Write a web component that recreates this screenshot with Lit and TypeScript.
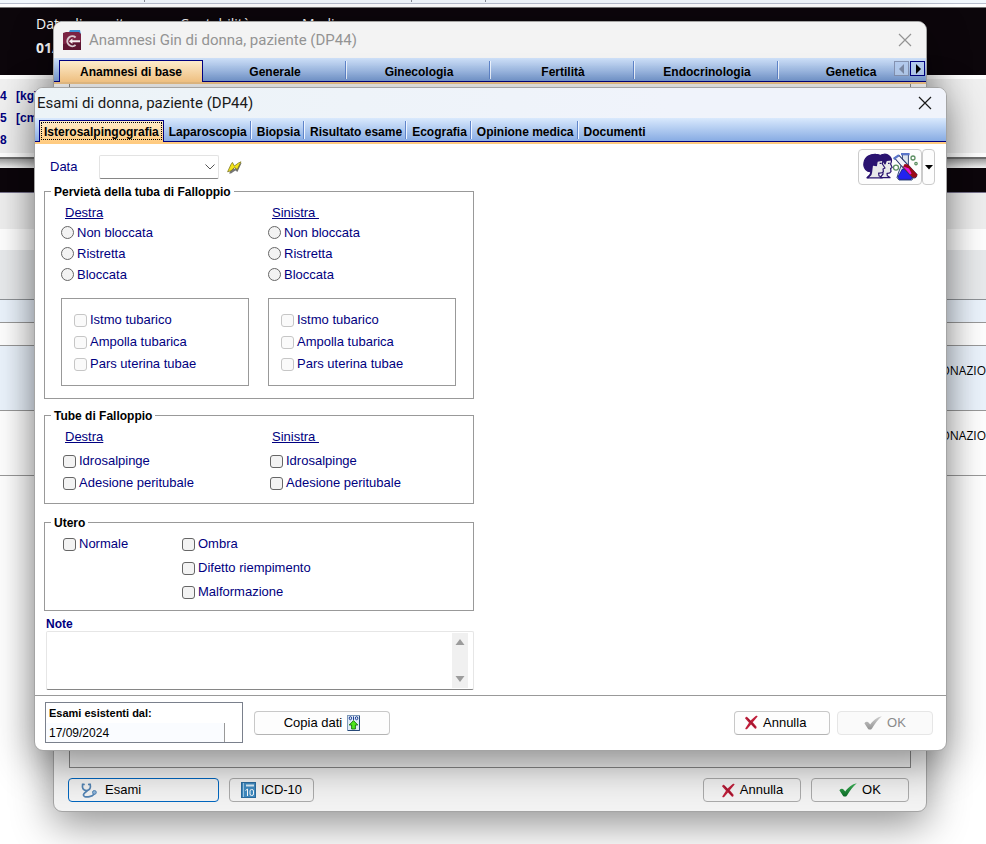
import { LitElement, html, css, svg, nothing } from "lit";
import { customElement, property, state } from "lit/decorators.js";
import { classMap } from "lit/directives/class-map.js";

const crossIcon = html`<svg width="14" height="15" viewBox="0 0 14 15" aria-hidden="true">
  <path d="M1 3.2 C2 1.6 3 1.4 3.6 2.4 L6.6 5.6 L11.4 1.2 C12.4 .4 13.6 .6 13.6 1.4 L8.8 7.2 L12.4 11.6 C13 12.8 12 14.4 10.8 13.4 L7 9.6 L3.4 13.8 C2.6 14.8 .9 14.4 1.4 13.2 L5 7.8 Z" fill="#bf1e3a" />
  <path d="M3.4 3.2 L7 7.4 L11.2 12.2" stroke="#8c1229" stroke-width="1" fill="none" />
</svg>`;

const tickIcon = (id: string, light: string, dark: string) => html`<svg width="18" height="14" viewBox="0 0 18 14" aria-hidden="true">
  <defs><linearGradient id=${id} x1="0" y1="0" x2="0" y2="1"><stop offset="0" stop-color=${light} /><stop offset="1" stop-color=${dark} /></linearGradient></defs>
  <path d="M.4 7.2 C1.8 5.4 3.8 5.4 5 7 L6.2 8.4 C9 4.8 13 1 17.8 .2 C13.8 3.6 10.6 8 8 12.4 C7 14 4.8 14 3.8 12.4 Z" fill="url(#${id})" />
</svg>`;

const boltIcon = html`<svg width="15" height="13" viewBox="0 0 15 13" aria-hidden="true">
  <path d="M2 12.5 L6 5 L7.4 8 L13 2.4 L14.6 2 L10.4 11 L8.4 9.4 L4 12.4 Z" fill="#777" />
  <path d="M.6 10.8 L4 3.4 L5.4 1.4 L7.4 5 L11.4 2 L14 .8 L10.2 8.6 L7.6 6.4 L4 9.8 Z" fill="#f2e21a" stroke="#6f6a18" stroke-width=".7" />
</svg>`;

const labIcon = html`<svg width="56" height="28" viewBox="-1 0 56 28" aria-hidden="true">
  <g stroke="#2a1370" stroke-width="1.2" stroke-linejoin="round">
    <path d="M19 10 C16 3 23 0 27 4 C29 6 28.6 9 27.6 11 L29.2 14.4 L27.6 15.4 L28 18.4 C27 20.6 25.6 20.4 24 20.4 L24.4 22.8 L27 24.6 L17 24.6 L20 21 Z" fill="#e8e8ea" />
    <path d="M16 4 C18 .6 24 0 27 4 L28 7 L23.4 7.4 L22 11 L20 8 Z" fill="#2a1370" />
    <path d="M8 8 L20 6.6 L19.4 11 L22 15 L20 16 L20.4 18.6 C19.4 20.6 17 20 15.6 20.2 L16 22.8 L19.4 24.8 L4 24.8 L7 22 L8 19 Z" fill="#e8e8ea" />
    <path d="M8.6 18.6 C4 19.6 0 15 1 9.6 C2 3.4 7.6 1 13 1.4 C17 1.6 20.6 4 20.4 7.2 L14.2 8.2 L13.4 12.6 L9.4 12 Z" fill="#2a1370" />
    <path d="M16.6 10.4 h2 M25 10.4 h1.6" fill="none" />
  </g>
  <path d="M4.4 25.2 C5.4 23 8.4 22.6 8.4 19" stroke="#2a1370" stroke-width="1.6" fill="none" />
  <path d="M39.4 1.6 L39.4 9 L35.4 20 L34 24.6 L36 27 L49 27 L50.4 24 L45.4 13 L45.4 1.6 Z" fill="#dce4ee" stroke="#354a7c" stroke-width="1" />
  <path d="M39.4 16 L45 16 L49.6 24 L48 26.4 L36.4 26.4 L34.8 24 Z" fill="#2222f0" stroke="#161682" stroke-width=".8" />
  <path d="M31.6 5 L36 2.4 L41.6 8.4 L53.8 21.4 C54.4 24.4 51.4 25.8 49.2 24 L38.4 13 Z" fill="#f3f3fa" stroke="#273469" stroke-width="1.1" />
  <path d="M41.6 11 L45 11.6 L54 21.2 C54.6 24.2 51.4 25.6 49.4 24 L40 14 Z" fill="#9a0a17" />
  <path d="M40.4 13.6 L46 15.4 L48.6 20.4 L47 21.4 Z" fill="#e815d8" />
  <path d="M30.6 6 L36 2.2 M38 1.2 h8.6" stroke="#5975c9" stroke-width="2.2" fill="none" />
  <g fill="#fff" stroke="#5c8f62" stroke-width="1.3"><circle cx="50" cy="5" r="2" /><circle cx="53" cy="10.6" r="1.2" /><circle cx="33" cy="14.6" r="2.5" /></g>
</svg>`;

const copyIcon = html`<svg width="13" height="16" viewBox="0 0 13 16" aria-hidden="true">
  <rect x=".5" y=".5" width="12" height="15" fill="#dfeaf6" stroke="#7e99b9" />
  <path d="M12.5 1 V15.5 H1" stroke="#274878" fill="none" />
  <g fill="none" stroke="#1c3f96" stroke-width="1"><ellipse cx="3.4" cy="3.2" rx="1.2" ry="1.6" /><path d="M6.5 1.4 V5" /><ellipse cx="9.6" cy="3.2" rx="1.2" ry="1.6" /></g>
  <path d="M6.5 5.6 L10.8 10 H8.4 V14 H4.6 V10 H2.2 Z" fill="#4ee61c" stroke="#14710d" stroke-width=".9" />
</svg>`;

const stethoscopeIcon = html`<svg width="16" height="15" viewBox="0 0 16 15" aria-hidden="true">
  <g fill="none" stroke="#5384b4" stroke-width="1.7" stroke-linecap="round">
    <path d="M3 1.4 H1.6 C1 5 2 7.4 5.4 7.6 C8.8 7.4 10 5 9.2 1.4 H7.8" />
    <path d="M6 8 C3 10 1.4 12 3.4 13.4 C6 14.6 11 13.8 13.2 11" />
  </g>
  <circle cx="13.4" cy="9.4" r="1.9" fill="#8fb5da" stroke="#5384b4" />
</svg>`;

const bookIcon = html`<svg width="15" height="16" viewBox="0 0 15 16" aria-hidden="true">
  <rect x=".5" y=".5" width="14" height="15" fill="#3f8ac0" stroke="#2c6c9f" />
  <path d="M2.5 1 V15" stroke="#9cc8e6" />
  <rect x="5" y="2.5" width="8" height="2" fill="#d9ebf6" />
  <g fill="none" stroke="#fff"><path d="M4.5 8.5 L6.5 7 V14" /><rect x="9" y="7.5" width="3.5" height="6" rx="1.6" /></g>
</svg>`;

const appIcon = html`<svg width="20" height="20" viewBox="0 0 20 20" aria-hidden="true">
  <path d="M6 4 L8 0 H18 L19 5 Z" fill="#3d8fd3" />
  <path d="M1 3 L4 2 H17 L19 4 V18 L18 20 H1 Z" fill="#7b2343" />
  <path d="M1 14 L19 12 V20 H1 Z" fill="#5d1430" />
  <path d="M13.6 7.4 A5 5 0 1 0 13.6 15" fill="none" stroke="#d9c9cf" stroke-width="2" />
  <path d="M7 11.2 L10.4 8.4 V10.2 H18 V12.2 H10.4 V14 Z" fill="#f6eff1" />
</svg>`;

const closeIcon = html`<svg width="14" height="14" viewBox="0 0 14 14" aria-hidden="true"><path d="M1 1 L13 13 M13 1 L1 13" stroke="currentColor" stroke-width="1.2" /></svg>`;

const triangle = (points: string) => html`<svg width="8" height="10" viewBox="0 0 8 10" aria-hidden="true">${svg`<polygon points=${points} fill="currentColor" />`}</svg>`;

@customElement("dialog-frame")
export class DialogFrame extends LitElement {
  @property() heading = "";
  @property({ type: Boolean, reflect: true }) inactive = false;

  static styles = css`
    :host {
      display: flex;
      flex-direction: column;
      box-sizing: border-box;
      border: 1px solid #a4a4a4;
      border-radius: 9px;
      background: #fff;
      box-shadow: 0 12px 42px rgba(0, 0, 0, 0.44);
      overflow: hidden;
    }
    .bar {
      display: flex;
      align-items: center;
      gap: 7px;
      height: 30px;
      padding: 0 14px 0 2px;
      background: linear-gradient(90deg, #ecf3f7, #f0f3fb 70%);
      color: #1a1a1a;
    }
    :host([inactive]) {
      background: #f3f3f3;
    }
    :host([inactive]) .bar {
      height: 36px;
      padding: 0 14px 0 8px;
      background: #f3f3f3;
      color: #939393;
    }
    .title {
      flex: 1;
      margin: 0;
      font: 400 15px/18px Roboto, "Noto Sans", sans-serif;
      white-space: nowrap;
    }
    .close {
      display: flex;
      padding: 0;
      border: 0;
      background: none;
      color: inherit;
    }
    ::slotted([slot="icon"]) {
      display: flex;
    }
  `;

  render() {
    return html`
      <header class="bar">
        <slot name="icon"></slot>
        <h2 class="title">${this.heading}</h2>
        <button class="close" aria-label="Chiudi">${closeIcon}</button>
      </header>
      <slot></slot>
    `;
  }
}

@customElement("app-root")
export class AppRoot extends LitElement {
  @state() private examTab = 0;
  @state() private historyTab = 0;

  private examTabs = ["Isterosalpingografia", "Laparoscopia", "Biopsia", "Risultato esame", "Ecografia", "Opinione medica", "Documenti"];
  private historyTabs = ["Anamnesi di base", "Generale", "Ginecologia", "Fertilità", "Endocrinologia", "Genetica"];

  static styles = css`
    :host {
      display: block;
      position: relative;
      min-height: 100vh;
      overflow: hidden;
      background: #fff;
      color: #000;
      font: 12px/16px "Liberation Sans", Arial, sans-serif;
    }
    * {
      box-sizing: border-box;
    }
    button, select, textarea, input {
      font: inherit;
      color: inherit;
      margin: 0;
    }

    /* page behind the dialogs */
    .toolbar {
      display: flex;
      height: 4px;
      padding-left: 144px;
      gap: 266px;
      background: #f2f8fd;
      border-bottom: 1px solid #b9bfce;
    }
    .toolbar i {
      width: 1px;
      height: 2px;
      background: #8a8f99;
    }
    .toolbar i:last-child {
      margin-left: -193px;
    }
    .patient {
      height: 68px;
      margin-top: 3px;
      padding: 9px 0 0 36px;
      border-top: 1px solid #777;
      background: #0c060b;
      color: #fff;
      font: 14px/14px "Open Sans", "Noto Sans", sans-serif;
    }
    .patient dl {
      display: grid;
      grid-template-columns: 144px 122px auto;
      row-gap: 10px;
      margin: 0;
      grid-auto-flow: column;
      grid-template-rows: auto auto;
      justify-content: start;
    }
    .patient dd {
      margin: 0;
      font-weight: 700;
    }
    .measures {
      height: 82px;
      padding-top: 9px;
      border-top: 4px solid #fff;
      border-bottom: 4px solid #fff;
      background: #f0f0f0;
      color: #000080;
      font-weight: 700;
    }
    .measures div {
      display: flex;
      height: 22px;
    }
    .measures span {
      width: 16px;
    }
    .rule {
      height: 11px;
      border-top: 2px solid #6e6e6e;
      background: linear-gradient(#9f9f9f, #f5f5f5);
    }
    .band {
      height: 25px;
      border-bottom: 1px solid #77738c;
      background: #0c060b;
    }
    .grey {
      height: 36px;
      background: #efefef;
    }
    .head {
      height: 50px;
      margin-top: 21px;
      border-bottom: 1px solid #8f9397;
      background: #e9ebed;
    }
    .row {
      display: flex;
      justify-content: flex-end;
      align-items: center;
      height: 23px;
      border-bottom: 1px solid #999;
      font: 12px/16px "Open Sans", "Noto Sans", sans-serif;
    }
    .row.tall {
      height: 65px;
      padding-bottom: 14px;
    }
    .row.blue {
      background: #ecf4fd;
    }

    /* dialogs */
    .history {
      position: absolute;
      inset: 21px 59px 32px 53px;
    }
    .exams {
      position: absolute;
      top: 87px;
      left: 34px;
      right: 39px;
    }
    .tabs {
      display: flex;
      height: 26px;
      padding: 2px 4px 0;
      border-bottom: 2px solid #ffcb80;
      background: linear-gradient(#d9e9fd, #84a9e2) no-repeat 0 0 / 100% 24px;
      position: relative;
    }
    .history .tabs {
      padding-left: 5px;
      border-bottom-color: #f2c68a;
      background-image: linear-gradient(#cfe1f9, #7499d3);
    }
    .tabs::after {
      content: "";
      position: absolute;
      left: 0;
      right: 0;
      bottom: 0;
      height: 1px;
      background: #000080;
    }
    .tab {
      padding: 1px 5px 0;
      margin: 0;
      border: 0;
      background: none;
      font-weight: 700;
      white-space: nowrap;
      position: relative;
    }
    .tab:not(.on):not(:last-of-type)::after {
      content: "";
      position: absolute;
      right: 0;
      top: 1px;
      height: 18px;
      width: 2px;
      background: linear-gradient(90deg, #5f85cb 50%, #eef5ff 50%);
    }
    .tab.on {
      z-index: 1;
      padding: 1px 4px 0;
      border: 1px solid #000080;
      border-bottom: 0;
      background: linear-gradient(#ffeccb, #ffcb80);
    }
    .exams .tab.on {
      outline: 1px dotted #000;
      outline-offset: -3px;
    }
    .history .tab {
      flex: 0 0 144px;
    }
    .history .tab.on {
      background: linear-gradient(#fdebcb, #eebf80);
    }
    .scroll {
      position: absolute;
      right: 1px;
      top: 3px;
      display: flex;
      gap: 1px;
    }
    .scroll button {
      display: grid;
      place-items: center;
      width: 15px;
      height: 15px;
      padding: 0;
      border: 1px solid #000080;
      background: #b5cdf0;
      color: #000;
    }
    .scroll button:disabled {
      border-color: #8795b4;
      color: #7c8aa6;
    }
    .sheet {
      flex: 1;
      margin: 0 15px;
      border: 1px solid #888;
      border-top: 0;
    }
    .actions {
      display: flex;
      gap: 10px;
      padding: 10px 17px 9px 14px;
    }
    .btn {
      display: flex;
      align-items: center;
      justify-content: center;
      gap: 5px;
      height: 24px;
      padding: 0;
      border: 1px solid #c8c8c8;
      border-bottom-color: #b4b4b4;
      border-radius: 4px;
      background: #fdfdfd;
      font-size: 13px;
      white-space: nowrap;
    }
    .actions .btn {
      width: 98px;
      border-color: #ababab;
      background: transparent;
    }
    .actions .btn.wide {
      width: 151px;
      justify-content: flex-start;
      gap: 8px;
      padding-left: 12px;
      border-color: #0067c0;
    }
    .actions .btn.icd {
      width: 85px;
    }
    .push {
      margin-left: auto;
    }
    .btn:disabled {
      border-color: #e6e6e6;
      background: #fafafa;
      color: #8a8a8a;
    }

    .body {
      display: flex;
      justify-content: space-between;
      align-items: flex-start;
      padding: 5px 11px 5px 9px;
      border-bottom: 1px solid #999;
      color: #000080;
      font-size: 13px;
    }
    .form {
      flex: 0 1 430px;
    }
    .date {
      display: flex;
      align-items: center;
      height: 24px;
      margin: 6px 0 5px;
      padding-left: 6px;
    }
    .date label {
      width: 49px;
    }
    .combo {
      width: 120px;
      height: 24px;
      margin-right: 8px;
      padding: 0 4px;
      appearance: none;
      border: 1px solid #e3e3e3;
      border-bottom-color: #868686;
      border-radius: 2px;
      background: #fff url('data:image/svg+xml,<svg xmlns="http://www.w3.org/2000/svg" width="10" height="6" viewBox="0 0 10 6"><path d="M.5.5 5 5 9.5.5" fill="none" stroke="%23555"/></svg>') no-repeat right 3px center;
    }
    .bare {
      display: flex;
      padding: 0;
      border: 0;
      background: none;
    }
    fieldset {
      min-width: 0;
      margin: 0 0 9px;
      padding: 0 6px;
      border: 1px solid #999;
    }
    legend {
      height: 15px;
      padding: 0 3px;
      color: #000;
      font: 700 12px/17px "Liberation Sans", Arial, sans-serif;
    }
    .cols {
      display: grid;
      grid-template-columns: 207px 1fr;
      padding: 3px 0 12px 10px;
    }
    .cols h3 {
      height: 20px;
      margin: 0 0 0 4px;
      font: 400 13px/22px "Liberation Sans", Arial, sans-serif;
      text-decoration: underline;
      white-space: pre;
    }
    .group {
      padding: 4px 0 0 2px;
    }
    .boxed {
      width: 188px;
      margin-top: 13px;
      padding: 10px 12px;
      border: 1px solid #999;
    }
    .opt {
      display: flex;
      align-items: center;
      gap: 3px;
      height: 22px;
      white-space: nowrap;
    }
    .opt.radio {
      height: 21px;
    }
    .opt input {
      appearance: none;
      width: 13px;
      height: 13px;
      border: 1px solid #666;
      border-radius: 3px;
      background: #f3f3f3;
    }
    .opt.radio input {
      border-radius: 50%;
    }
    .opt input:checked {
      background: #0067c0;
    }
    .opt input:disabled {
      border-color: #c6c6c6;
      background: #fafafa;
    }
    .uterus {
      display: grid;
      grid-template-columns: 119px 1fr;
      padding: 2px 0 6px 12px;
    }
    .uterus .opt {
      height: 24px;
    }
    .tight {
      padding-bottom: 9px;
    }
    .utero {
      margin-top: 11px;
      margin-bottom: 5px;
    }
    .note {
      display: block;
      height: 15px;
      padding-left: 2px;
      font: 700 12px/17px "Liberation Sans", Arial, sans-serif;
    }
    .memo {
      display: flex;
      height: 59px;
      margin-left: 2px;
      padding: 1px 5px 1px 0;
      border: 1px solid #e6e6e6;
      border-bottom-color: #868686;
      border-radius: 2px;
    }
    .memo textarea {
      flex: 1;
      min-width: 0;
      border: 0;
      resize: none;
      background: none;
      outline: 0;
      overflow: hidden;
    }
    .memobar {
      display: flex;
      flex-direction: column;
      justify-content: space-between;
      align-items: center;
      width: 16px;
      padding: 5px 0;
      background: #f0f0f0;
    }
    .lab {
      display: flex;
    }
    .lab button {
      display: grid;
      place-items: center;
      height: 36px;
      width: 64px;
      padding: 0;
      border: 1px solid #cbcbcb;
      border-radius: 4px;
      background: #fdfdfd;
    }
    .lab .more {
      width: 13px;
      color: #000;
    }
    .footer {
      display: flex;
      align-items: center;
      gap: 7px;
      padding: 6px 13px 7px 10px;
    }
    .list {
      width: 198px;
      height: 41px;
      margin-right: 4px;
      border: 1px solid #7a808c;
      border-collapse: separate;
      border-spacing: 0;
    }
    .list th {
      height: 20px;
      padding: 0 3px;
      font-size: 11px;
      line-height: 14px;
      text-align: left;
    }
    .list td {
      padding: 0 3px;
      background: #fafcff;
      line-height: 16px;
      border-right: 1px solid #999;
    }
    .list td.gap {
      width: 17px;
      padding: 0;
      border: 0;
      background: none;
    }
    .footer .btn {
      width: 96px;
    }
    .footer .btn.copy {
      width: 136px;
    }
    .footer .cancel {
      justify-content: flex-start;
      padding-left: 9px;
    }
  `;

  private option(label: string, kind: "radio" | "checkbox", name = "", disabled = false) {
    return html`<label class=${classMap({ opt: true, radio: kind === "radio" })}>
      <input type=${kind} name=${name || nothing} ?disabled=${disabled} />${label}
    </label>`;
  }

  private patency(title: string, name: string) {
    return html`<div>
      <h3>${title}</h3>
      ${["Non bloccata", "Ristretta", "Bloccata"].map((l) => this.option(l, "radio", name))}
      <div class="boxed">
        ${["Istmo tubarico", "Ampolla tubarica", "Pars uterina tubae"].map((l) => this.option(l, "checkbox", "", true))}
      </div>
    </div>`;
  }

  private tubes(title: string) {
    return html`<div>
      <h3>${title}</h3>
      <div class="group">${["Idrosalpinge", "Adesione peritubale"].map((l) => this.option(l, "checkbox"))}</div>
    </div>`;
  }

  private tabList(names: string[], current: number, pick: (i: number) => void, extra: unknown = nothing) {
    return html`<nav class="tabs">
      ${names.map((n, i) => html`<button class=${classMap({ tab: true, on: i === current })} @click=${() => pick(i)}>${n}</button>`)}
      ${extra}
    </nav>`;
  }

  render() {
    return html`
      <main>
        <div class="toolbar"><i></i><i></i><i></i></div>
        <section class="patient">
          <dl>
            <dt>Data di nascita</dt><dd>01/</dd>
            <dt>Contabilità</dt><dd></dd>
            <dt>Medico</dt><dd></dd>
          </dl>
        </section>
        <section class="measures">
          <div><span>4</span>[kg]</div>
          <div><span>5</span>[cm]</div>
          <div><span>8</span></div>
        </section>
        <div class="rule"></div>
        <div class="band"></div>
        <div class="grey"></div>
        <div class="head"></div>
        <div class="row blue"></div>
        <div class="row"></div>
        <div class="row tall blue">DONAZIO</div>
        <div class="row tall">DONAZIO</div>
      </main>

      <dialog-frame class="history" inactive heading="Anamnesi Gin di donna, paziente (DP44)">
        <span slot="icon">${appIcon}</span>
        ${this.tabList(this.historyTabs, this.historyTab, (i) => (this.historyTab = i), html`<div class="scroll">
          <button disabled aria-label="Indietro">${triangle("6,0 6,10 1,5")}</button>
          <button aria-label="Avanti">${triangle("2,0 2,10 7,5")}</button>
        </div>`)}
        <div class="sheet"></div>
        <div class="actions">
          <button class="btn wide">${stethoscopeIcon}Esami</button>
          <button class="btn icd">${bookIcon}ICD-10</button>
          <button class="btn push">${crossIcon}Annulla</button>
          <button class="btn">${tickIcon("tick-on", "#3fb45a", "#0b6b25")}OK</button>
        </div>
      </dialog-frame>

      <dialog-frame class="exams" heading="Esami di donna, paziente (DP44)">
        ${this.tabList(this.examTabs, this.examTab, (i) => (this.examTab = i))}
        <div class="body">
          <form class="form">
            <div class="date">
              <label for="date">Data</label>
              <select id="date" class="combo"><option></option></select>
              <button type="button" class="bare" aria-label="Oggi">${boltIcon}</button>
            </div>
            <fieldset>
              <legend>Pervietà della tuba di Falloppio</legend>
              <div class="cols">${this.patency("Destra", "right")}${this.patency("Sinistra ", "left")}</div>
            </fieldset>
            <fieldset>
              <legend>Tube di Falloppio</legend>
              <div class="cols tight">${this.tubes("Destra")}${this.tubes("Sinistra ")}</div>
            </fieldset>
            <fieldset class="utero">
              <legend>Utero</legend>
              <div class="uterus">
                <div>${this.option("Normale", "checkbox")}</div>
                <div>${["Ombra", "Difetto riempimento", "Malformazione"].map((l) => this.option(l, "checkbox"))}</div>
              </div>
            </fieldset>
            <label class="note" for="note">Note</label>
            <div class="memo">
              <textarea id="note"></textarea>
              <div class="memobar">
                <svg width="10" height="8" viewBox="0 0 10 8"><path d="M5 1 L9.5 7 H.5 Z" fill="#9c9c9c" /></svg>
                <svg width="10" height="8" viewBox="0 0 10 8"><path d="M5 7 L9.5 1 H.5 Z" fill="#9c9c9c" /></svg>
              </div>
            </div>
          </form>
          <div class="lab">
            <button aria-label="Laboratorio">${labIcon}</button>
            <button class="more" aria-label="Altre opzioni"><svg width="8" height="5" viewBox="0 0 8 5"><path d="M0 0 H8 L4 4.5 Z" /></svg></button>
          </div>
        </div>
        <div class="footer">
          <table class="list">
            <tr><th colspan="2">Esami esistenti dal:</th></tr>
            <tr><td>17/09/2024</td><td class="gap"></td></tr>
          </table>
          <button class="btn copy">Copia dati ${copyIcon}</button>
          <button class="btn cancel push">${crossIcon}Annulla</button>
          <button class="btn" disabled>${tickIcon("tick-off", "#cfcfcf", "#949494")}OK</button>
        </div>
      </dialog-frame>
    `;
  }
}
